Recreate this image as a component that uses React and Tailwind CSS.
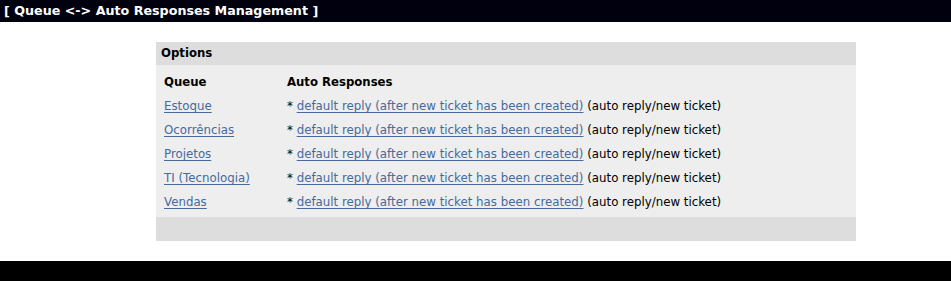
import React from 'react';

const queues = ['Estoque', 'Ocorrências', 'Projetos', 'TI (Tecnologia)', 'Vendas'];

function App() {
  return (
    <div className="min-h-[281px] bg-white text-black" style={{ fontFamily: '"DejaVu Sans", Verdana, sans-serif' }}>
      {/* Header */}
      <div className="h-[22px] bg-[#00000f] text-white font-bold text-[12.7px] leading-[22px] pl-[4px]">
        [ Queue &lt;-&gt; Auto Responses Management ]
      </div>

      <div className="pt-[20px] pb-[20px] pl-[156px]">
        <div className="w-[700px] bg-[#eeeeee] text-[11.8px]">
          <div className="h-[23px] bg-[#dddddd] font-bold text-[11.7px] leading-[23px] pl-[5px]">Options</div>
          <div className="px-[8px] pt-[6px] pb-[2px]">
            <div className="flex h-[24px] items-center font-bold text-[11.7px]">
              <div className="w-[123px]">Queue</div>
              <div>Auto Responses</div>
            </div>
            {queues.map((q) => (
              <div key={q} className="flex h-[24px] items-center">
                <div className="w-[123px]">
                  <a href="#" className="text-[#466a9a] underline underline-offset-2">{q}</a>
                </div>
                <div>
                  * <a href="#" className="text-[#466a9a] underline underline-offset-2">default reply (after new ticket has been created)</a> (auto reply/new ticket)
                </div>
              </div>
            ))}
          </div>
          <div className="h-[24px] bg-[#dddddd]"></div>
        </div>
      </div>

      <div className="h-[20px] bg-black"></div>
    </div>
  );
}

export default App;
